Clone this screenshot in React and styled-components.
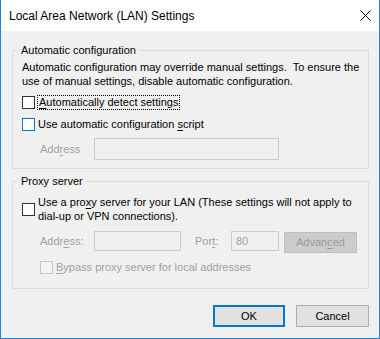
import React from "react";
import styled, { createGlobalStyle } from "styled-components";

const Global = createGlobalStyle`
  html, body { margin: 0; padding: 0; background: #ffffff; }
  body { font-family: "Liberation Sans", Arial, sans-serif; font-size: 11px; color: #000; }
  * { box-sizing: border-box; }
`;

const Window = styled.div`
  width: 380px;
  height: 339px;
  display: flex;
  flex-direction: column;
  border: 1px solid #1883d7;
  border-top: none;
  background: #f0f0f0;
`;

const TitleBar = styled.div`
  height: 31px;
  flex: none;
  background: #ffffff;
  display: flex;
  align-items: center;
  justify-content: space-between;
  padding: 0 8px 0 8px;
  font-size: 12px;
  color: #000;
`;

const CloseIcon = styled.svg`
  width: 11px;
  height: 11px;
  display: block;
`;

const Body = styled.div`
  flex: 1;
  display: flex;
  flex-direction: column;
  padding: 12px 10px 11px 11px;
`;

const Group = styled.fieldset`
  margin: ${(p) => p.$mt || 0}px 0 0 0;
  border: 1px solid #dcdcdc;
  padding: 0 8px ${(p) => p.$pb || 8}px 9px;
  min-width: 0;
`;

const Legend = styled.legend`
  padding: 0 3px;
  margin-left: -4px;
  line-height: 15px;
  font-size: 11px;
`;

const Para = styled.p`
  margin: 2px 0 0 0;
  line-height: 14px;
  white-space: nowrap;
`;

const CheckRow = styled.div`
  display: flex;
  align-items: center;
  min-height: 22px;
  margin-top: ${(p) => p.$mt || 0}px;
  padding-left: ${(p) => p.$indent || 0}px;
  color: ${(p) => (p.$disabled ? "#a0a0a0" : "#000")};
  white-space: nowrap;
`;

const Box = styled.span`
  flex: none;
  width: 13px;
  height: 13px;
  border: 1px solid
    ${(p) =>
      p.$state === "hover" ? "#0078d7" : p.$state === "disabled" ? "#c6c6c6" : "#333333"};
  background: ${(p) => (p.$state === "disabled" ? "#f3f3f3" : "#ffffff")};
  margin-right: ${(p) => (p.$focus ? 2 : 3)}px;
`;

const LabelText = styled.span`
  line-height: ${(p) => (p.$multi ? "14px" : "13px")};
  padding: ${(p) => (p.$focus ? "0 1px 0 1px" : "0")};
  border: ${(p) => (p.$focus ? "1px dotted #000" : "none")};
`;

const Key = styled.span`
  text-decoration: underline;
  text-underline-offset: 2px;
`;

const FieldRow = styled.div`
  display: flex;
  align-items: center;
  height: ${(p) => p.$h || 22}px;
  margin-top: ${(p) => p.$mt || 0}px;
  padding-left: 18px;
  color: #a0a0a0;
  white-space: nowrap;
`;

const FieldLabel = styled.span`
  flex: none;
  width: ${(p) => p.$w}px;
  margin-left: ${(p) => p.$ml || 0}px;
`;

const TextBox = styled.div`
  flex: none;
  width: ${(p) => p.$w}px;
  height: ${(p) => p.$h}px;
  border: 1px solid #cccccc;
  background: #f0f0f0;
  color: #a0a0a0;
  padding-left: 4px;
  display: flex;
  align-items: center;
`;

const DisabledButton = styled.div`
  flex: none;
  width: 73px;
  height: 21px;
  margin-left: 5px;
  margin-top: 2px;
  background: #cccccc;
  border: 1px solid #bfbfbf;
  color: #9a9a9a;
  display: flex;
  align-items: center;
  justify-content: center;
`;

const Footer = styled.div`
  display: flex;
  justify-content: flex-end;
  gap: 11px;
  margin-top: auto;
`;

const Button = styled.button`
  width: ${(p) => p.$w}px;
  height: 22px;
  background: #e1e1e1;
  border: ${(p) => (p.$primary ? "2px solid #0078d7" : "1px solid #adadad")};
  font-family: inherit;
  font-size: 11px;
  color: #000;
  padding: 0;
  margin: 0;
`;

export default function App() {
  return (
    <>
      <Global />
      <Window>
        <TitleBar>
          <span>Local Area Network (LAN) Settings</span>
          <CloseIcon viewBox="0 0 11 11">
            <path d="M0.5 0.5 L10.5 10.5 M10.5 0.5 L0.5 10.5" stroke="#000" strokeWidth="1" fill="none" />
          </CloseIcon>
        </TitleBar>
        <Body>
          <Group>
            <Legend>Automatic configuration</Legend>
            <Para>
              Automatic configuration may override manual settings.{"\u00a0 "}To ensure the
              <br />
              use of manual settings, disable automatic configuration.
            </Para>
            <CheckRow $mt={3}>
              <Box $focus />
              <LabelText $focus>
                <Key>A</Key>utomatically detect settings
              </LabelText>
            </CheckRow>
            <CheckRow>
              <Box $state="hover" />
              <LabelText>
                Use automatic configuration <Key>s</Key>cript
              </LabelText>
            </CheckRow>
            <FieldRow $mt={3}>
              <FieldLabel $w={54}>
                Add<Key>r</Key>ess
              </FieldLabel>
              <TextBox $w={185} $h={22} />
            </FieldRow>
          </Group>
          <Group $mt={5} $pb={10}>
            <Legend>Proxy server</Legend>
            <CheckRow $mt={6}>
              <Box />
              <LabelText $multi>
                Use a pro<Key>x</Key>y server for your LAN (These settings will not apply to
                <br />
                dial-up or VPN connections).
              </LabelText>
            </CheckRow>
            <FieldRow $mt={6} $h={24}>
              <FieldLabel $w={54}>
                Addr<Key>e</Key>ss:
              </FieldLabel>
              <TextBox $w={87} $h={20} />
              <FieldLabel $w={36} $ml={14}>
                Por<Key>t</Key>:
              </FieldLabel>
              <TextBox $w={48} $h={20}>80</TextBox>
              <DisabledButton>
                <span>
                  Advan<Key>c</Key>ed
                </span>
              </DisabledButton>
            </FieldRow>
            <CheckRow $indent={18} $disabled $mt={3}>
              <Box $state="disabled" />
              <LabelText>
                <Key>B</Key>ypass proxy server for local addresses
              </LabelText>
            </CheckRow>
          </Group>
          <Footer>
            <Button $primary $w={72}>OK</Button>
            <Button $w={73}>Cancel</Button>
          </Footer>
        </Body>
      </Window>
    </>
  );
}
